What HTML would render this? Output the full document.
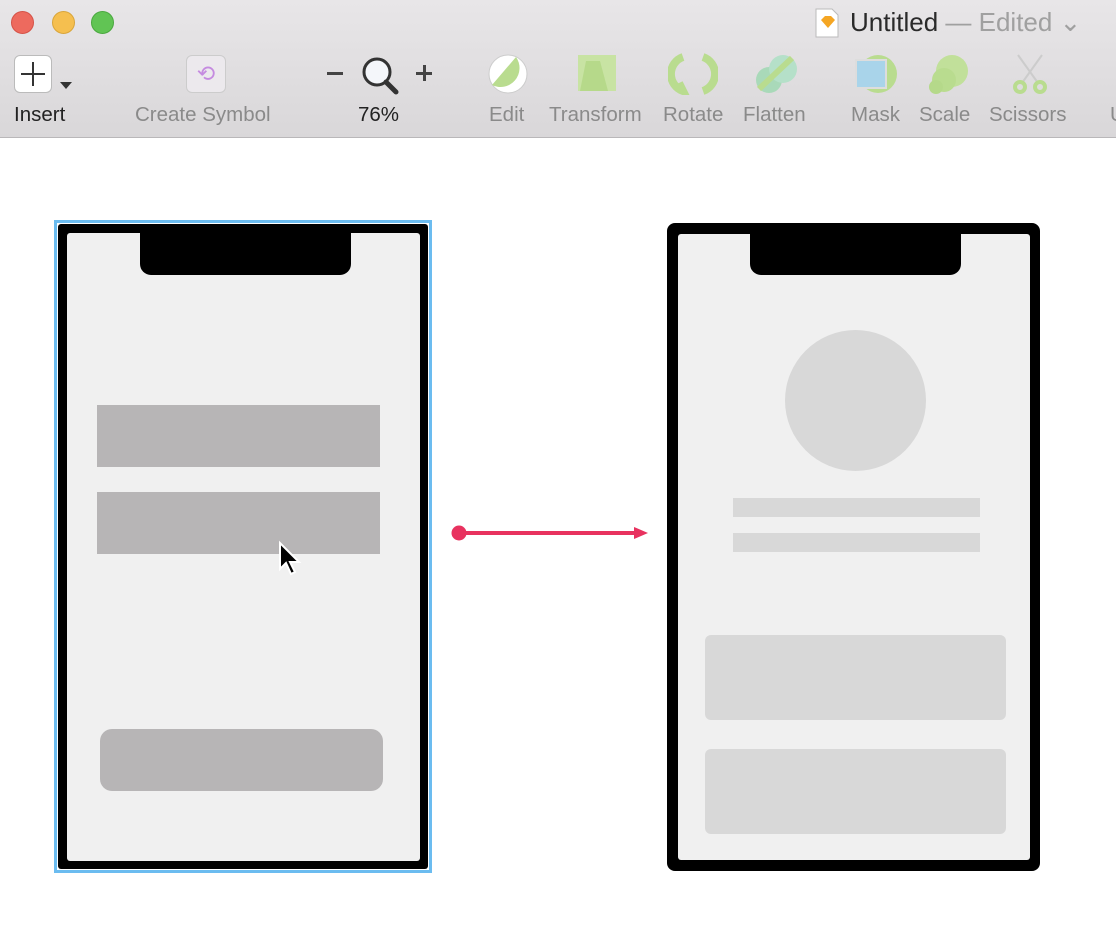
<!DOCTYPE html>
<html><head><style>
*{margin:0;padding:0;box-sizing:border-box}
body{width:1116px;height:932px;background:#fff;position:relative;overflow:hidden;font-family:"Liberation Sans",sans-serif}
.a{position:absolute}
.tb{left:0;top:0;width:1116px;height:138px;background:linear-gradient(#e8e6e8,#d9d7d9);border-bottom:1px solid #b9b7b9}
.lbl{position:absolute;top:103px;font-size:20.5px;color:#8a8a8a;white-space:nowrap}
</style></head><body>
<div class="a tb">
<div class="a" style="left:11px;top:11px;width:23px;height:23px;border-radius:50%;background:#ed6a5e;border:1px solid #d55247"></div>
<div class="a" style="left:52px;top:11px;width:23px;height:23px;border-radius:50%;background:#f5bf4f;border:1px solid #d9a53a"></div>
<div class="a" style="left:91px;top:11px;width:23px;height:23px;border-radius:50%;background:#61c454;border:1px solid #4aa83f"></div>
<svg class="a" style="left:815px;top:8px" width="24" height="30"><path d="M1 1h16l6 6v22H1z" fill="#fff" stroke="#bbb"/><path d="M6 12l4-4h6l4 4-7 8z" fill="#f5a623"/></svg>
<div class="a" style="left:850px;top:7px;font-size:26px;color:#2a2a2a;white-space:nowrap">Untitled <span style="color:#a0a0a0">— Edited ⌄</span></div>
<div class="a" style="left:14px;top:55px;width:38px;height:38px;background:#fff;border:1px solid #bbb;border-radius:6px"></div>
<div class="a" style="left:32px;top:62px;width:2px;height:24px;background:#333"></div>
<div class="a" style="left:21px;top:73px;width:24px;height:2px;background:#333"></div>
<div class="a" style="left:60px;top:82px;width:0;height:0;border-left:6px solid transparent;border-right:6px solid transparent;border-top:7px solid #333"></div>
<div class="lbl" style="left:14px;color:#222">Insert</div>
<div class="a" style="left:186px;top:55px;width:40px;height:38px;background:#ece9ed;border:1px solid #ccc;border-radius:6px;color:#c58be0;font-size:22px;text-align:center;line-height:36px">⟲</div>
<div class="lbl" style="left:135px">Create Symbol</div>
<div class="a" style="left:327px;top:72px;width:16px;height:3px;background:#444"></div>
<svg class="a" style="left:358px;top:54px" width="44" height="42"><circle cx="19" cy="18" r="13" fill="#f4f6fa" stroke="#333" stroke-width="3"/><path d="M28 28l10 10" stroke="#333" stroke-width="5" stroke-linecap="round"/></svg>
<div class="a" style="left:416px;top:72px;width:16px;height:3px;background:#444"></div>
<div class="a" style="left:423px;top:65px;width:3px;height:16px;background:#444"></div>
<div class="lbl" style="left:358px;color:#222">76%</div>
<svg class="a" style="left:486px;top:53px" width="44" height="42"><circle cx="22" cy="21" r="19" fill="#fff" stroke="#ccc"/><path d="M6 32L30 4A19 19 0 0 1 6 32z" fill="#b9dc8f"/></svg>
<div class="lbl" style="left:489px">Edit</div>
<svg class="a" style="left:576px;top:53px" width="44" height="42"><rect x="2" y="2" width="38" height="36" fill="#c8e3a3"/><path d="M10 8h14l8 30H4z" fill="#b6d98a"/></svg>
<div class="lbl" style="left:549px">Transform</div>
<svg class="a" style="left:668px;top:53px" width="50" height="42"><path d="M15 4a18 18 0 0 0 0 34l-4-8M35 4a18 18 0 0 1 0 34" fill="none" stroke="#b9dc8f" stroke-width="8"/></svg>
<div class="lbl" style="left:663px">Rotate</div>
<svg class="a" style="left:754px;top:53px" width="46" height="42"><circle cx="15" cy="27" r="13" fill="#a9d9b9"/><circle cx="29" cy="16" r="14" fill="#b5e0c9"/><path d="M5 36L38 5" stroke="#b9dc8f" stroke-width="6"/></svg>
<div class="lbl" style="left:743px">Flatten</div>
<svg class="a" style="left:852px;top:53px" width="48" height="42"><circle cx="26" cy="21" r="19" fill="#b9dc8f"/><rect x="4" y="7" width="30" height="28" fill="#a9d4ea" stroke="#ddd" stroke-width="2"/></svg>
<div class="lbl" style="left:851px">Mask</div>
<svg class="a" style="left:924px;top:53px" width="46" height="42"><circle cx="28" cy="18" r="16" fill="#c1e09a"/><circle cx="20" cy="27" r="12" fill="#b9dc8f"/><circle cx="12" cy="34" r="7" fill="#b5d98a"/></svg>
<div class="lbl" style="left:919px">Scale</div>
<svg class="a" style="left:1010px;top:53px" width="40" height="42"><path d="M8 2l20 28M32 2L12 30" stroke="#ccc" stroke-width="2"/><circle cx="10" cy="34" r="5" fill="none" stroke="#b9dc8f" stroke-width="4"/><circle cx="30" cy="34" r="5" fill="none" stroke="#b9dc8f" stroke-width="4"/></svg>
<div class="lbl" style="left:989px">Scissors</div>
<div class="lbl" style="left:1110px">U</div>
</div>

<div class="a" style="left:54px;top:220px;width:378px;height:653px;border:3px solid #6bbcf0"></div>
<div class="a" style="left:58px;top:224px;width:370px;height:645px;background:#000;border-radius:3px"></div>
<div class="a" style="left:67px;top:233px;width:353px;height:628px;background:#f0f0f0;border-radius:3px"></div>
<div class="a" style="left:140px;top:233px;width:211px;height:42px;background:#000;border-radius:0 0 11px 11px"></div>
<div class="a" style="left:97px;top:405px;width:283px;height:62px;background:#b7b5b6"></div>
<div class="a" style="left:97px;top:492px;width:283px;height:62px;background:#b7b5b6"></div>
<div class="a" style="left:100px;top:729px;width:283px;height:62px;background:#b7b5b6;border-radius:12px"></div>
<svg class="a" style="left:276px;top:540px" width="30" height="40"><path d="M4 3v26l6-6 5 11 4-2-5-10h9z" fill="#000" stroke="#fff" stroke-width="2"/></svg>

<svg class="a" style="left:448px;top:522px" width="205" height="22"><circle cx="11" cy="11" r="7.5" fill="#e8325f"/><path d="M11 11h180" stroke="#e8325f" stroke-width="4"/><path d="M186 5l14 6-14 6z" fill="#e8325f"/></svg>

<div class="a" style="left:667px;top:223px;width:373px;height:648px;background:#000;border-radius:8px"></div>
<div class="a" style="left:678px;top:234px;width:352px;height:626px;background:#f0f0f0;border-radius:3px"></div>
<div class="a" style="left:750px;top:234px;width:211px;height:41px;background:#000;border-radius:0 0 11px 11px"></div>
<div class="a" style="left:785px;top:330px;width:141px;height:141px;border-radius:50%;background:#d8d8d8"></div>
<div class="a" style="left:733px;top:498px;width:247px;height:19px;background:#d8d8d8"></div>
<div class="a" style="left:733px;top:533px;width:247px;height:19px;background:#d8d8d8"></div>
<div class="a" style="left:705px;top:635px;width:301px;height:85px;background:#d8d8d8;border-radius:6px"></div>
<div class="a" style="left:705px;top:749px;width:301px;height:85px;background:#d8d8d8;border-radius:6px"></div>
</body></html>
